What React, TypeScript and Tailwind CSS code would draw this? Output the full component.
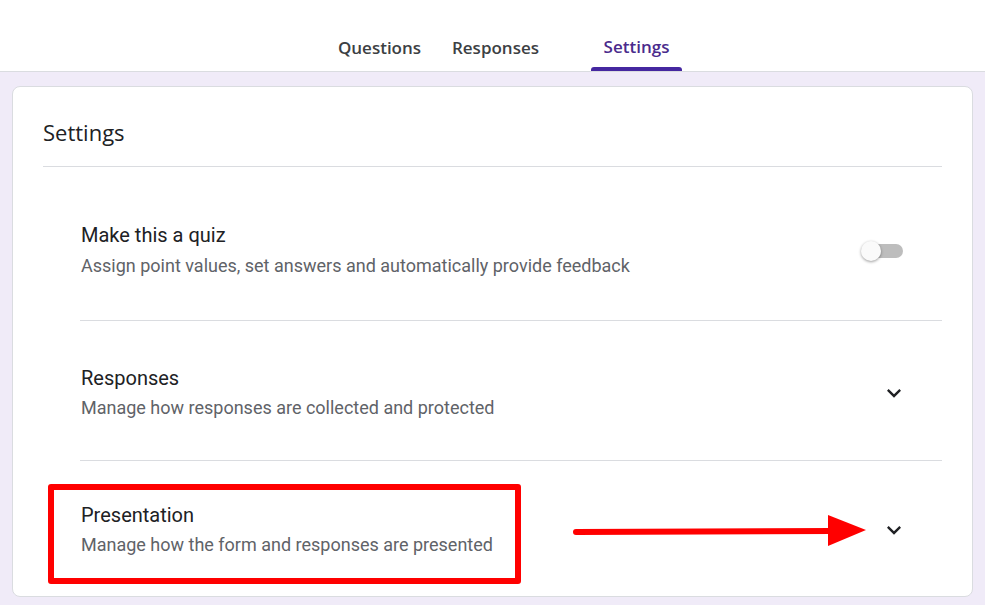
import React from "react";

function Chevron() {
  return (
    <svg width="28" height="28" viewBox="0 0 24 24" className="block">
      <path d="M7.41 8.59 12 13.17l4.59-4.58L18 10l-6 6-6-6z" fill="#202124" />
    </svg>
  );
}

function Toggle() {
  return (
    <div className="relative w-[42px] h-[24px] flex items-center justify-end">
      <div className="w-[38px] h-[14px] rounded-full bg-[#bdbdbd]" />
      <div className="absolute left-0 top-[2px] w-[20px] h-[20px] rounded-full bg-[#fafafa] shadow-[0_1px_3px_rgba(0,0,0,0.4)]" />
    </div>
  );
}

function Row({
  title,
  sub,
  right,
  pt,
  pb,
  pr,
  divider,
  gap,
}: {
  title: string;
  sub: string;
  right: React.ReactNode;
  pt: string;
  pb: string;
  pr: string;
  divider: boolean;
  gap: string;
}) {
  return (
    <div className={`ml-[37px] ${divider ? "border-b border-[#dadce0]" : ""}`}>
      <div className={`flex items-center justify-between pl-[1px] ${pr} ${pt} ${pb}`}>
        <div className={`flex flex-col ${gap}`}>
          <div className="text-[20px] leading-[24px] text-[#202124]">{title}</div>
          <div className="text-[18px] leading-[24px] text-[#5f6368]">{sub}</div>
        </div>
        {right}
      </div>
    </div>
  );
}

export default function App() {
  return (
    <div
      className="w-[985px] h-[605px] bg-[#f0ebf8] overflow-hidden relative"
      style={{ fontFamily: "Roboto, 'Liberation Sans', sans-serif" }}
    >
      <div className="h-[72px] bg-white border-b border-[#dadce0] flex items-end">
        <div
          className="flex ml-[330px] text-[17px] font-semibold text-[#3c4043]"
          style={{ fontFamily: "'Open Sans', Roboto, sans-serif" }}
        >
          <div className="w-[99px] h-[48px] flex items-center justify-center pt-[2px]">Questions</div>
          <div className="w-[133px] h-[48px] flex items-center justify-center pt-[2px]">Responses</div>
          <div className="ml-[29px] w-[91px] h-[48px] flex flex-col items-center justify-between">
            <div className="h-[44px] flex items-center text-[#4a2b8c] pt-[4px]">Settings</div>
            <div className="w-full h-[4px] rounded-t-[3px] bg-[#4527a0]" />
          </div>
        </div>
      </div>

      <div className="mx-[12px] mt-[14px] bg-white rounded-[8px] border border-[#dadce0] h-[511px] px-[30px]">
        <div className="pt-[31px] pb-[20px] border-b border-[#dadce0]">
          <div
            className="text-[22px] leading-[28px] text-[#202124]"
            style={{ fontFamily: "'Open Sans', Roboto, sans-serif" }}
          >
            Settings
          </div>
        </div>
        <Row
          title="Make this a quiz"
          sub="Assign point values, set answers and automatically provide feedback"
          right={<Toggle />}
          pt="pt-[56px]"
          pb="pb-[42px]"
          pr="pr-[39px]"
          divider
          gap="gap-[7px]"
        />
        <Row
          title="Responses"
          sub="Manage how responses are collected and protected"
          right={<Chevron />}
          pt="pt-[45px]"
          pb="pb-[40px]"
          pr="pr-[34px]"
          divider
          gap="gap-[6px]"
        />
        <Row
          title="Presentation"
          sub="Manage how the form and responses are presented"
          right={<Chevron />}
          pt="pt-[42px]"
          pb="pb-[30px]"
          pr="pr-[34px]"
          divider={false}
          gap="gap-[6px]"
        />
      </div>

      {/* Red annotation box */}
      <div className="absolute left-[48px] top-[484px] w-[473px] h-[100px] border-[6px] border-[#ff0000] rounded-[3px]" />
      {/* Red arrow */}
      <svg className="absolute left-[568px] top-[510px]" width="305" height="42" viewBox="0 0 305 42">
        <line x1="8" y1="22" x2="265" y2="21" stroke="#ff0000" strokeWidth="6" strokeLinecap="round" />
        <polygon points="260,5 298,20 260,36" fill="#ff0000" />
      </svg>
    </div>
  );
}
